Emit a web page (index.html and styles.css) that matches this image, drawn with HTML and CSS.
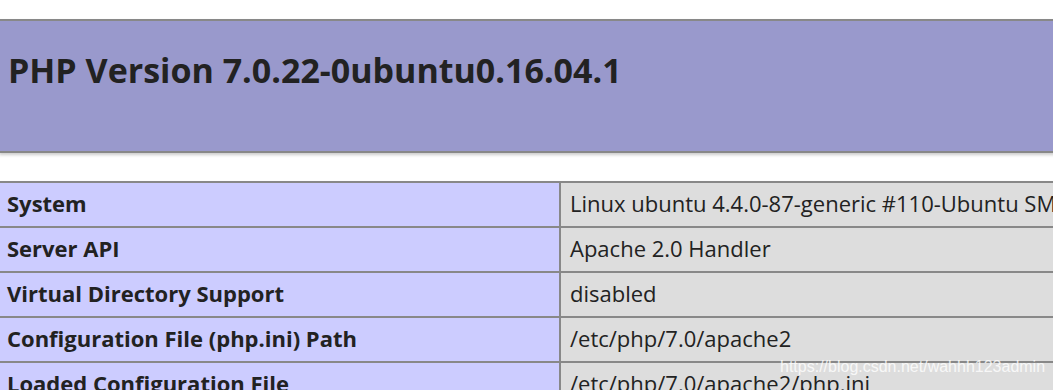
FILE: index.html
```html
<!DOCTYPE html>
<html lang="en">
<head>
<meta charset="UTF-8" />
<title>phpinfo()</title>
<link rel="stylesheet" href="styles.css">
</head>
<body>
  <div class="center">
    <table class="info head-table">
      <tr class="h">
        <td><h1 class="p">PHP Version 7.0.22-0ubuntu0.16.04.1</h1></td>
      </tr>
    </table>

    <table class="info">
      <tr><td class="e">System</td><td class="v">Linux ubuntu 4.4.0-87-generic #110-Ubuntu SMP Tue Jul 18 12:55:35 UTC 2017 x86_64</td></tr>
      <tr><td class="e">Server API</td><td class="v">Apache 2.0 Handler</td></tr>
      <tr><td class="e">Virtual Directory Support</td><td class="v">disabled</td></tr>
      <tr><td class="e">Configuration File (php.ini) Path</td><td class="v">/etc/php/7.0/apache2</td></tr>
      <tr><td class="e">Loaded Configuration File</td><td class="v">/etc/php/7.0/apache2/php.ini</td></tr>
    </table>
  </div>

  <div class="watermark">https://blog.csdn.net/wahhh123admin</div>
</body>
</html>
```

FILE: styles.css
```css
* { box-sizing: border-box; margin: 0; padding: 0; }
html, body { background:#fff; overflow:hidden; }
body {
  font-family: "Open Sans", "Noto Sans", sans-serif;
  color:#222;
  width:1053px; height:390px;
  position:relative;
}

.center { padding-top:19px; margin-left:-2px; }

table.info {
  border-collapse:collapse;
  width:1500px;
  box-shadow:1px 2px 3px #ccc;
}
.info td {
  border:2px solid #888;
  font-size:22px;
  line-height:30px;
  white-space:nowrap;
}

/* Heading box */
.head-table { margin-bottom:28px; }
.h td { background:#9999cc; height:132px; vertical-align:top; }
.p {
  font-size:34px; font-weight:700;
  line-height:44px;
  padding:27px 0 0 8px;
  color:#222;
}

/* Rows */
.e {
  background:#ccccff; width:561px;
  font-weight:700;
  height:45px; padding:0 7px 4px;
  vertical-align:middle;
}
.v {
  background:#dddddd;
  padding:0 9px 4px;
  vertical-align:middle;
  font-weight:400;
}

.watermark {
  position:absolute; left:780px; top:358px;
  font-family:"Liberation Sans", Arial, sans-serif;
  font-size:16px;
  color:rgba(255,255,255,0.8);
  pointer-events:none;
}
```
